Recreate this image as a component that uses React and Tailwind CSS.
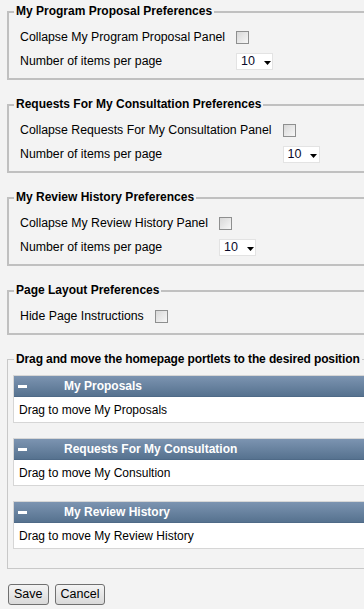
import React from "react";

const font = { fontFamily: '"Liberation Sans", Arial, sans-serif' };

function Checkbox() {
  return (
    <span className="inline-block w-[13px] h-[13px] border border-[#8e8f8f] bg-gradient-to-br from-[#d8d8d8] to-[#f7f7f7] box-border" />
  );
}

function Select() {
  return (
    <span className="flex items-center w-[37px] h-[17px] bg-white border border-[#e3e3e3] box-border pl-[4px]">
      <span className="text-[12.5px] leading-none text-[#0a0a2a]">10</span>
      <svg width="7" height="4" viewBox="0 0 7 4" className="ml-[9px] mt-[3px]">
        <polygon points="0,0 7,0 3.5,4" fill="#000" />
      </svg>
    </span>
  );
}

function PrefSet({ title, rows, first }) {
  return (
    <fieldset
      className={`border-2 border-[#c0c0c0] ml-[7px] w-[420px] pl-[5px] pr-2 pt-[6px] pb-[5px] ${first ? "" : "mt-[17px]"}`}
    >
      <legend className="px-[2px] text-[12px] font-bold leading-[15px] text-black">{title}</legend>
      <div className="grid grid-cols-[auto_auto] justify-start gap-x-[11px] pl-[6px]">
        {rows.map((r, i) => (
          <React.Fragment key={i}>
            <div className="h-[24px] flex items-center text-[12.3px] text-black">{r.label}</div>
            <div className="h-[24px] flex items-center">{r.type === "cb" ? <Checkbox /> : <Select />}</div>
          </React.Fragment>
        ))}
      </div>
    </fieldset>
  );
}

function Portlet({ title, body, first }) {
  return (
    <div className={`border border-[#d6d6d6] bg-white ${first ? "" : "mt-[15px]"}`}>
      <div className="h-[21px] flex items-center bg-gradient-to-b from-[#7c94b1] to-[#56728f] border-b border-[#4f6a87]">
        <span className="ml-[4px] w-[9px] h-[3px] bg-white" />
        <span className="ml-[37px] text-[12px] font-bold text-white">{title}</span>
      </div>
      <div className="h-[25px] flex items-center pl-[5px] text-[12px] text-black">{body}</div>
    </div>
  );
}

export default function App() {
  return (
    <div className="w-[364px] h-[609px] overflow-hidden bg-[#f3f3f3]" style={font}>
      <div className="w-[440px] pt-[4px]">
        <PrefSet
          first
          title="My Program Proposal Preferences"
          rows={[
            { label: "Collapse My Program Proposal Panel", type: "cb" },
            { label: "Number of items per page", type: "sel" },
          ]}
        />
        <PrefSet
          title="Requests For My Consultation Preferences"
          rows={[
            { label: "Collapse Requests For My Consultation Panel", type: "cb" },
            { label: "Number of items per page", type: "sel" },
          ]}
        />
        <PrefSet
          title="My Review History Preferences"
          rows={[
            { label: "Collapse My Review History Panel", type: "cb" },
            { label: "Number of items per page", type: "sel" },
          ]}
        />
        <PrefSet
          title="Page Layout Preferences"
          rows={[{ label: "Hide Page Instructions", type: "cb" }]}
        />
        <fieldset className="border border-[#c8c8c8] ml-[7px] w-[420px] mt-[17px] pl-[5px] pr-2 pt-[8px] pb-[19px]">
          <legend className="px-[2px] ml-[1px] text-[12px] font-bold leading-[15px] text-black tracking-[-0.12px]">
            Drag and move the homepage portlets to the desired position
          </legend>
          <Portlet first title="My Proposals" body="Drag to move My Proposals" />
          <Portlet title="Requests For My Consultation" body="Drag to move My Consultion" />
          <Portlet title="My Review History" body="Drag to move My Review History" />
        </fieldset>
        <div className="flex gap-[6px] ml-[8px] mt-[15px]">
          <button className="h-[21px] px-[5px] border border-[#707070] rounded-[3px] bg-gradient-to-b from-[#f4f4f4] to-[#d9d9d9] text-[12.5px] text-black leading-none">
            Save
          </button>
          <button className="h-[21px] px-[5px] border border-[#707070] rounded-[3px] bg-gradient-to-b from-[#f4f4f4] to-[#d9d9d9] text-[12.5px] text-black leading-none">
            Cancel
          </button>
        </div>
      </div>
    </div>
  );
}
